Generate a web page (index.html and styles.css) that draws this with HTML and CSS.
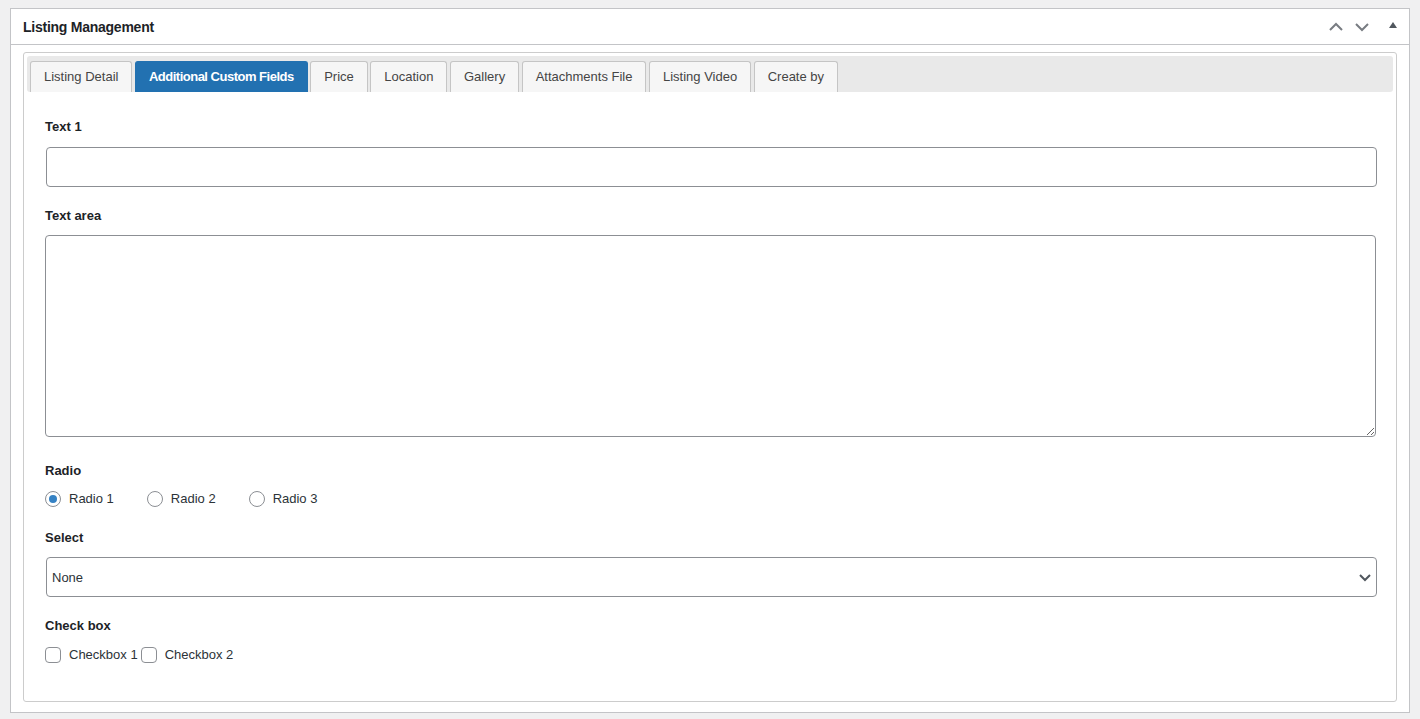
FILE: index.html
```html
<!DOCTYPE html>
<html lang="en">
<head>
    <meta charset="UTF-8">
    <title>Listing Management</title>
    <link rel="stylesheet" href="styles.css">
</head>
<body>
    <div class="postbox">
        <div class="postbox-header">
            <h2>Listing Management</h2>
            <div class="handle-actions">
                <svg width="16" height="16" viewBox="0 0 16 16" fill="none" stroke="#787c82" stroke-width="2"><polyline points="2,11 8,5 14,11"></polyline></svg>
                <svg width="16" height="16" viewBox="0 0 16 16" fill="none" stroke="#787c82" stroke-width="2"><polyline points="2,5 8,11 14,5"></polyline></svg>
                <svg class="toggle" width="10" height="10" viewBox="0 0 10 10"><polygon points="1,8 5,2 9,8" fill="#50575e"></polygon></svg>
            </div>
        </div>
        <div class="inside">
            <div class="tabs-panel">
                <ul class="tabs">
                    <li>Listing Detail</li>
                    <li class="active">Additional Custom Fields</li>
                    <li>Price</li>
                    <li>Location</li>
                    <li>Gallery</li>
                    <li>Attachments File</li>
                    <li>Listing Video</li>
                    <li>Create by</li>
                </ul>
                <div class="fields">
                    <div class="field">
                        <label class="field-label">Text 1</label>
                        <input type="text" class="text-input">
                    </div>
                    <div class="field field-textarea">
                        <label class="field-label">Text area</label>
                        <textarea class="text-area"></textarea>
                    </div>
                    <div class="field field-radio">
                        <label class="field-label">Radio</label>
                        <div class="choices radios">
                            <label class="choice"><input type="radio" name="radio" checked> Radio 1</label>
                            <label class="choice"><input type="radio" name="radio"> Radio 2</label>
                            <label class="choice"><input type="radio" name="radio"> Radio 3</label>
                        </div>
                    </div>
                    <div class="field field-select">
                        <label class="field-label">Select</label>
                        <div class="select-wrap">
                            <select class="select-input">
                                <option>None</option>
                            </select>
                            <svg class="select-arrow" width="14" height="14" viewBox="0 0 14 14" fill="none" stroke="#50575e" stroke-width="2"><polyline points="2,5 7,10 12,5"></polyline></svg>
                        </div>
                    </div>
                    <div class="field">
                        <label class="field-label">Check box</label>
                        <div class="choices checks">
                            <label class="choice"><input type="checkbox"> Checkbox 1</label>
                            <label class="choice"><input type="checkbox"> Checkbox 2</label>
                        </div>
                    </div>
                </div>
            </div>
        </div>
    </div>
</body>
</html>
```

FILE: styles.css
```css
body {
    margin: 0;
    padding: 8px 10px 7px;
    background-color: #f0f0f1;
    font-family: "Liberation Sans", Arial, sans-serif;
    font-size: 13px;
    color: #1d2327;
}
.postbox {
    background-color: white;
    border: 1px solid #c3c4c7;
}
.postbox-header {
    display: flex;
    justify-content: space-between;
    align-items: center;
    height: 35px;
    border-bottom: 1px solid #c3c4c7;
}
.postbox-header h2 {
    margin: 0;
    padding-left: 12px;
    font-size: 14px;
    font-weight: 600;
    letter-spacing: -0.25px;
    color: #1d2327;
}
.handle-actions {
    display: flex;
    align-items: center;
    gap: 10px;
    padding-right: 11px;
}
.handle-actions .toggle {
    margin-left: 8px;
    margin-top: -3px;
}
.inside {
    padding: 7px 12px 10px;
}
.tabs-panel {
    border: 1px solid #cccccc;
    border-radius: 3px;
    padding: 3px;
}
.tabs {
    display: flex;
    gap: 2.5px;
    margin: 0;
    padding: 5px 3px 0;
    list-style: none;
    background-color: #e9e9e9;
    border-radius: 3px;
}
.tabs li {
    padding: 0 13px;
    height: 30px;
    line-height: 30px;
    background-color: #f6f6f6;
    border: 1px solid #c5c5c5;
    border-bottom: none;
    border-radius: 3px 3px 0 0;
    color: #454545;
    font-family: "Liberation Sans", Arial, sans-serif;
    font-size: 13px;
}
.tabs li.active {
    background-color: #2271b1;
    border-color: #2271b1;
    color: white;
    font-weight: bold;
    letter-spacing: -0.5px;
}
.fields {
    padding: 26px 16px 34px 18px;
}
.field {
    display: flex;
    flex-direction: column;
    margin-bottom: 20px;
}
.field:last-child {
    margin-bottom: 0;
}
.field-label {
    font-weight: 600;
    font-size: 13px;
    line-height: 18px;
    margin-bottom: 11px;
}
.field-textarea {
    margin-bottom: 25px;
}
.field-textarea .field-label,
.field-radio .field-label,
.field-select .field-label {
    margin-bottom: 10px;
}
.field-radio {
    margin-bottom: 21px;
}
.text-input {
    box-sizing: border-box;
    height: 40px;
    margin-left: 1px;
    border: 1px solid #8c8f94;
    border-radius: 4px;
    font-family: inherit;
}
.text-area {
    box-sizing: border-box;
    height: 202px;
    width: calc(100% - 1px);
    border: 1px solid #8c8f94;
    border-radius: 4px;
    font-family: inherit;
}
.choices {
    display: flex;
    align-items: center;
}
.radios {
    gap: 33px;
}
.checks {
    gap: 3px;
}
.choice {
    display: flex;
    align-items: center;
    gap: 8px;
    font-size: 13px;
    color: #2c3338;
    line-height: 18px;
}
.choice input {
    appearance: none;
    margin: 0;
    width: 16px;
    height: 16px;
    border: 1px solid #8c8f94;
    background-color: white;
}
.radios input {
    border-radius: 50%;
    display: grid;
    place-items: center;
}
.radios input:checked::before {
    content: "";
    width: 8px;
    height: 8px;
    border-radius: 50%;
    background-color: #3582c4;
}
.checks input {
    border-radius: 4px;
}
.select-wrap {
    position: relative;
}
.select-input {
    appearance: none;
    box-sizing: border-box;
    width: calc(100% - 1px);
    margin-left: 1px;
    height: 40px;
    padding: 0 24px 0 5px;
    border: 1px solid #8c8f94;
    border-radius: 4px;
    background-color: white;
    font-family: inherit;
    font-size: 13px;
    color: #2c3338;
}
.select-arrow {
    position: absolute;
    right: 5px;
    top: 13px;
    pointer-events: none;
}
```
